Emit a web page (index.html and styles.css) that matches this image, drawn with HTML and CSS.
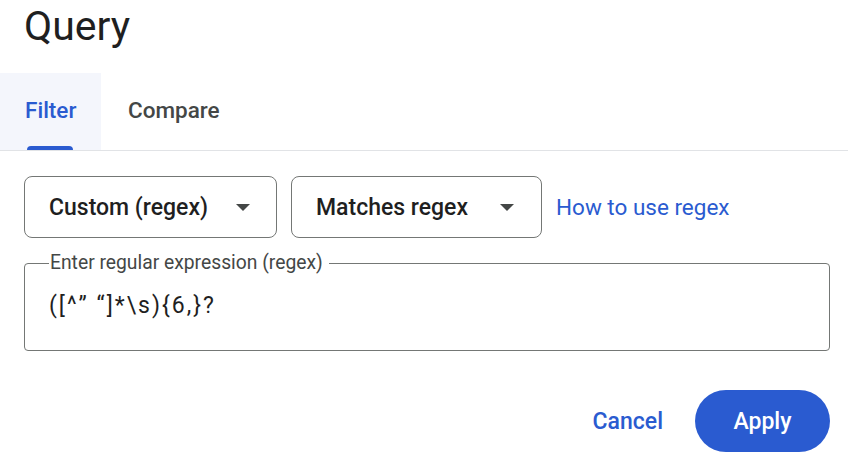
FILE: index.html
```html
<!DOCTYPE html>
<html>
<head>
<meta charset="utf-8">
<link rel="stylesheet" href="styles.css">
</head>
<body>
<div class="dialog">
  <h1 class="title">Query</h1>
  <div class="tabs">
    <div class="tab active"><span class="tab-label">Filter</span><span class="indicator"></span></div>
    <div class="tab"><span class="tab-label">Compare</span></div>
  </div>
  <div class="content">
    <div class="row">
      <div class="select select-type"><span class="select-text">Custom (regex)</span><span class="caret"></span></div>
      <div class="select select-op"><span class="select-text">Matches regex</span><span class="caret"></span></div>
      <a class="help-link">How to use regex</a>
    </div>
    <fieldset class="field">
      <legend class="field-label">Enter regular expression (regex)</legend>
      <div class="field-value">([^” “]*\s){6,}?</div>
    </fieldset>
    <div class="actions">
      <button class="btn btn-text">Cancel</button>
      <button class="btn btn-filled">Apply</button>
    </div>
  </div>
</div>
</body>
</html>
```
FILE: styles.css
```css
* { box-sizing: border-box; }
html, body { margin: 0; padding: 0; background: #fff; }
body { font-family: Roboto, "Noto Sans", sans-serif; color: #1f1f1f; width: 848px; height: 468px; overflow: hidden; }

.title {
  margin: 0;
  height: 73px;
  padding: 1px 0 0 24px;
  font-size: 41px;
  font-weight: 400;
  line-height: 50px;
  color: #1f1f1f;
}

.tabs {
  display: flex;
  height: 78px;
  border-bottom: 1px solid #e1e3e6;
}
.tab {
  position: relative;
  display: flex;
  align-items: center;
  padding: 0 27px 3px;
  font-size: 22.5px;
  font-weight: 500;
  color: #444746;
}
.tab.active { background: #f4f6fc; color: #2a5bd0; width: 101px; padding-left: 25px; }
.indicator {
  position: absolute;
  left: 27px;
  bottom: 0;
  width: 46px;
  height: 4px;
  background: #2a5bd0;
  border-radius: 4px 4px 0 0;
}

.content { padding: 25px 18px 0 24px; }

.row { display: flex; align-items: center; gap: 14px; }
.select {
  height: 62px;
  border: 1px solid #747775;
  border-radius: 8px;
  display: flex;
  align-items: center;
  justify-content: space-between;
  padding: 0 26px 0 24px;
  font-size: 23px;
  font-weight: 500;
  color: #1f1f1f;
}
.select-type { width: 253px; }
.select-op { width: 251px; padding-right: 27px; }
.caret {
  width: 0; height: 0;
  border-left: 7px solid transparent;
  border-right: 7px solid transparent;
  border-top: 7px solid #444746;
}
.help-link { color: #2a5bd0; font-size: 22.5px; margin-left: 0; }

.field {
  margin: 14px 0 0 0;
  height: 99px;
  border: 1px solid #747775;
  border-radius: 4px;
  padding: 0 24px;
}
.field-label {
  padding: 0 6px 0 1px;
  font-size: 19.3px;
  color: #444746;
  line-height: 22px;
}
.field-value {
  font-size: 23px;
  letter-spacing: 2px;
  color: #1f1f1f;
  margin-top: 18px;
  line-height: 28px;
}

.actions { display: flex; justify-content: flex-end; align-items: center; margin-top: 39px; gap: 0; }
.btn { font-family: inherit; border: none; cursor: pointer; font-size: 23px; font-weight: 500; }
.btn-text { background: none; color: #2a5bd0; padding: 0 32px 0 0; height: 62px; }
.btn-filled { background: #2a5bd0; color: #fff; height: 62px; width: 135px; border-radius: 31px; }
```
